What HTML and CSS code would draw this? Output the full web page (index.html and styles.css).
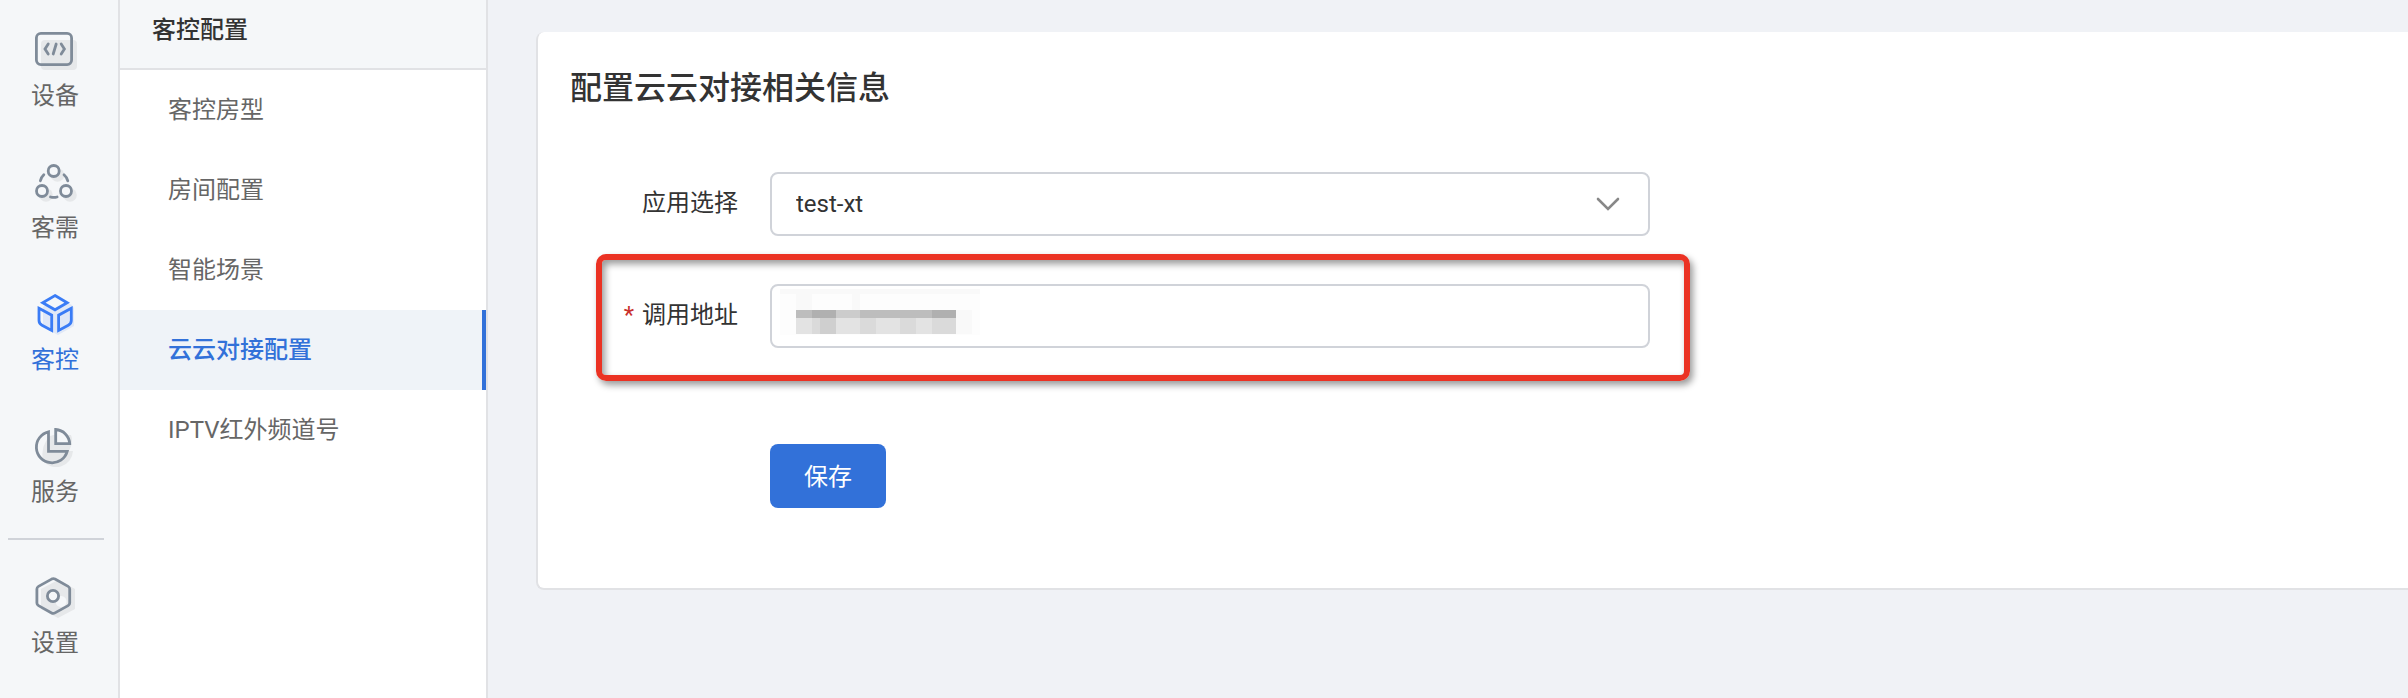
FILE: index.html
```html
<!DOCTYPE html>
<html lang="zh-CN">
<head>
<meta charset="utf-8">
<meta name="viewport" content="width=device-width, initial-scale=1">
<title>云云对接配置</title>
<link rel="stylesheet" href="styles.css">
</head>
<body>
<div class="app">
  <nav class="rail" aria-label="主导航">
    <div class="rail-group">
      <a class="rail-item" href="#">
        <svg class="icon" viewBox="0 0 44 44">
          <rect class="shade" x="8" y="8" width="36" height="30" rx="4"/>
          <g class="line">
            <rect x="3.4" y="1.4" width="35.2" height="31.2" rx="4.5"/>
            <path d="M15.2 12l-3.2 5 3.2 5M23.2 12l-3 10M28.2 12l3.2 5-3.2 5"/>
          </g>
        </svg>
        <span>设备</span>
      </a>
      <a class="rail-item" href="#">
        <svg class="icon" viewBox="0 0 44 44">
          <g class="shade">
            <circle cx="24.5" cy="11" r="6.8"/>
            <circle cx="13" cy="31" r="6.8"/>
            <circle cx="37" cy="31" r="6.8"/>
          </g>
          <g class="line">
            <circle class="hole" cx="20.7" cy="7" r="5.5"/>
            <circle class="hole" cx="9" cy="27" r="5.5"/>
            <circle class="hole" cx="33" cy="27" r="5.5"/>
            <path d="M7.4 16.8q.8-3.600 3.400-6M31 10.800q2.800 2.400 3.800 6M17.500 33q3.300.9 6.600 0"/>
          </g>
        </svg>
        <span>客需</span>
      </a>
      <a class="rail-item rail-item-active" href="#" aria-current="page">
        <svg class="icon" viewBox="0 0 44 44">
          <path class="shade" d="M25 2l14 7 2 3v18l-16 9-15-8V11z"/>
          <g class="line">
            <path class="hole" d="M22-.5L34.200 6.700 22 13.800 9.700 6.700z"/>
            <path d="M6 12.300l12.700 6.900v15.300L9 29.200Q6 27.500 6 24.500zM38.300 12.300l-12.700 6.900v15.300l9.700-5.300q3-1.700 3-4.700z"/>
          </g>
        </svg>
        <span>客控</span>
      </a>
      <a class="rail-item" href="#">
        <svg class="icon" viewBox="0 0 44 44">
          <path class="shade" d="M17 8q5-2 10-1h11q2 5 0 11l-2 5h4A17 17 0 0 1 10 33q-3-15 7-25z"/>
          <g class="line">
            <path d="M15.500 3.800v19.500h18.700A15.700 15.700 0 1 1 15.500 3.800z"/>
            <path class="hole" d="M22.700 1.500v14.100h14A15 15 0 0 0 22.700 1.500z"/>
          </g>
        </svg>
        <span>服务</span>
      </a>
    </div>
    <hr class="rail-rule">
    <a class="rail-item" href="#">
      <svg class="icon" viewBox="0 0 44 44">
        <path class="shade" d="M25 1l17 9v20l-17 9-17-9V10zm3 16a5.500 5.500 0 1 0 .1 0z" fill-rule="evenodd"/>
        <g class="line">
          <path d="M18.600.1q1.700-.9 3.400 0l13.100 7.300q1.600.9 1.600 2.700v13.800q0 1.800-1.600 2.700L22 33.900q-1.700.9-3.400 0L5.500 26.600q-1.600-.9-1.600-2.700V10.100q0-1.800 1.600-2.700z"/>
          <circle class="hole" cx="20" cy="17" r="5.600"/>
        </g>
      </svg>
      <span>设置</span>
    </a>
  </nav>

  <aside class="menu">
    <h2 class="menu-title">客控配置</h2>
    <nav class="menu-list" aria-label="客控配置">
      <a class="menu-item" href="#">客控房型</a>
      <a class="menu-item" href="#">房间配置</a>
      <a class="menu-item" href="#">智能场景</a>
      <a class="menu-item menu-item-active" href="#" aria-current="page">云云对接配置</a>
      <a class="menu-item" href="#">IPTV红外频道号</a>
    </nav>
  </aside>

  <main class="content">
    <section class="card">
      <h1 class="card-title">配置云云对接相关信息</h1>
      <form class="form">
        <div class="row">
          <label class="label" for="app">应用选择</label>
          <div class="field">
            <select class="control" id="app">
              <option>test-xt</option>
            </select>
            <svg class="chevron" viewBox="0 0 24 14"><path d="M2 2l10 10L22 2"/></svg>
          </div>
        </div>
        <div class="row">
          <label class="label" for="address"><span class="required">*</span>调用地址</label>
          <div class="field">
            <input class="control" id="address" type="text">
            <svg class="mosaic" viewBox="0 0 200 48" shape-rendering="crispEdges">
              <path fill="#fdfdfd" d="M0 0h200v46H0z"/>
              <path fill="#f9f9f9" d="M0 0h200v5H0zM16 5h16v16H16zM72 5h8v16h-8zM176 21h16v24h-16z"/>
              <path fill="#bdbdbd" d="M16 21h160v8H16z"/>
              <path fill="#b0b0b0" d="M32 21h24v8H32zM152 21h24v8h-24z"/>
              <path fill="#cccccc" d="M56 21h24v8H56z"/>
              <path fill="#e3e3e3" d="M16 29h160v16H16z"/>
              <path fill="#dadada" d="M32 29h8v16h-8zM80 29h16v16H80zM120 29h16v16h-16zM152 29h24v16h-24z"/>
              <path fill="#cfcfcf" d="M40 29h16v16H40z"/>
            </svg>
          </div>
          <div class="highlight"></div>
        </div>
        <div class="actions">
          <button class="save" type="button">保存</button>
        </div>
      </form>
    </section>
  </main>
</div>
</body>
</html>
```
FILE: styles.css
```css
* {
  box-sizing: border-box;
}

body {
  margin: 0;
  background: #f0f2f6;
  color: #333;
  font-family: Roboto, "Noto Sans CJK SC", sans-serif;
  font-size: 24px;
}

a {
  color: inherit;
  text-decoration: none;
}

.app {
  display: flex;
  min-height: 100vh;
}

/* Icon rail */
.rail {
  flex: 0 0 120px;
  padding-top: 32px;
  background: #f5f7f9;
  border-right: 2px solid #e1e2e5;
  color: #666;
}

.rail-group {
  display: grid;
  gap: 48px;
}

.rail-item {
  display: flex;
  flex-direction: column;
  align-items: center;
  padding-right: 8px;
  line-height: 40px;
}

.rail-item-active {
  color: #3271d9;
}

.rail-rule {
  height: 2px;
  margin: 26px 14px 39px 8px;
  border: 0;
  background: #d0d3d9;
}

.icon {
  width: 44px;
  height: 44px;
  overflow: visible;
}

.line {
  fill: none;
  stroke: #7f8b99;
  stroke-width: 2.8;
  stroke-linecap: round;
}

.shade {
  fill: #e6e8ea;
}

.hole {
  fill: #f5f7f9;
}

.rail-item-active .line {
  stroke: #3a7cf6;
}

.rail-item-active .shade {
  fill: #e0e8f7;
}

/* Section menu */
.menu {
  flex: 0 0 368px;
  background: #fff;
  border-right: 2px solid #e1e2e5;
}

.menu-title {
  margin: 0;
  padding: 10px 32px 18px;
  background: #f5f7f9;
  border-bottom: 2px solid #e1e2e5;
  font-size: 24px;
  font-weight: 500;
  line-height: 40px;
}

.menu-item {
  display: block;
  padding: 20px 48px;
  border-right: 4px solid transparent;
  color: #666;
  line-height: 40px;
}

.menu-item-active {
  background: #eff3f8;
  border-right-color: #3271d9;
  color: #3271d9;
  font-weight: 500;
}

/* Content */
.content {
  flex: 1;
  min-width: 0;
  padding: 32px 0 32px 48px;
}

.card {
  padding: 32px 32px 80px;
  background: #fff;
  border: solid #e1e2e5;
  border-width: 0 0 2px 2px;
  border-radius: 8px 0 0 8px;
}

.card-title {
  margin: 0 0 60px;
  font-size: 32px;
  font-weight: 500;
  line-height: 48px;
}

.form {
  max-width: 1080px;
}

.row {
  position: relative;
  display: flex;
  align-items: center;
  margin-bottom: 48px;
}

.label {
  flex: 0 0 200px;
  padding-right: 32px;
  line-height: 40px;
  padding-bottom: 2px;
  text-align: right;
}

.required {
  margin-right: 8px;
  color: #c9302c;
}

.field {
  position: relative;
  flex: 1;
  display: flex;
}

.control {
  width: 100%;
  height: 64px;
  padding: 0 24px;
  appearance: none;
  background: #fff;
  border: 2px solid #d0d3d9;
  border-radius: 8px;
  color: #333;
  font: inherit;
}

.chevron {
  position: absolute;
  top: 25px;
  right: 30px;
  width: 24px;
  height: 14px;
  fill: none;
  stroke: #888;
  stroke-width: 2.6;
  stroke-linecap: round;
  pointer-events: none;
}

.mosaic {
  position: absolute;
  top: 5px;
  left: 10px;
  width: 200px;
  height: 48px;
  pointer-events: none;
}

.highlight {
  position: absolute;
  inset: -30px -40px -33px 26px;
  border: 6px solid #eb3223;
  border-radius: 10px;
  box-shadow: 3px 4px 7px rgba(0, 0, 0, 0.4), inset 3px 4px 7px rgba(0, 0, 0, 0.4);
  pointer-events: none;
}

.actions {
  padding: 48px 0 0 200px;
}

.save {
  display: block;
  height: 64px;
  padding: 0 34px 4px;
  background: #3271d9;
  border: 0;
  border-radius: 8px;
  color: #fff;
  font: inherit;
}
```
